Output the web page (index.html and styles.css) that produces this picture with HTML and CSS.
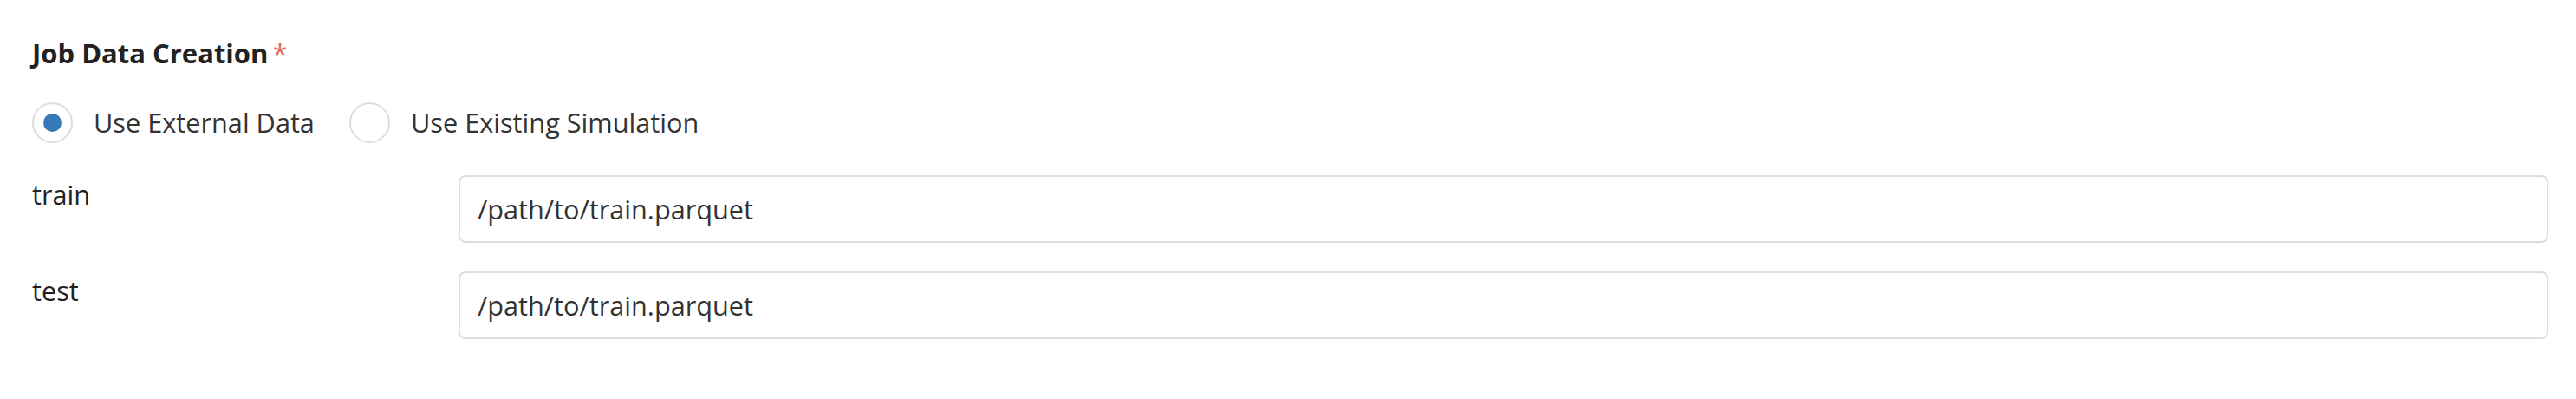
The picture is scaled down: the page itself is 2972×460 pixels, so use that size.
FILE: index.html
```html
<!DOCTYPE html>
<html lang="en">
<head>
<meta charset="utf-8">
<title>Job Data Creation</title>
<link rel="stylesheet" href="styles.css">
</head>
<body>
<form class="form">
  <div class="title">Job Data Creation<span class="req">*</span></div>
  <div class="radios">
    <label class="radio">
      <span class="dot checked"></span>
      <span class="radio-label">Use External Data</span>
    </label>
    <label class="radio">
      <span class="dot"></span>
      <span class="radio-label">Use Existing Simulation</span>
    </label>
  </div>
  <div class="fields">
    <div class="row">
      <label class="field-label">train</label>
      <input class="field-input" type="text" value="/path/to/train.parquet">
    </div>
    <div class="row">
      <label class="field-label">test</label>
      <input class="field-input" type="text" value="/path/to/train.parquet">
    </div>
  </div>
</form>
</body>
</html>
```

FILE: styles.css
```css
html, body {
  margin: 0;
  padding: 0;
  background: #ffffff;
}

body {
  font-family: "Open Sans", "Liberation Sans", sans-serif;
  font-size: 30.7px;
  line-height: 45px;
  color: #333333;
}

.form {
  padding: 39px 32px 0 37px;
  display: flex;
  flex-direction: column;
}

.title {
  font-weight: 700;
  font-size: 31px;
  color: #222222;
  height: 45px;
}

.req {
  color: #e0685a;
  font-weight: 400;
  margin-left: 5px;
}

.radios {
  display: flex;
  align-items: center;
  gap: 40px;
  margin-top: 34px;
  height: 47px;
}

.radio {
  display: flex;
  align-items: center;
  gap: 24px;
}

.dot {
  width: 47px;
  height: 47px;
  box-sizing: border-box;
  border: 2px solid #dddddd;
  border-radius: 50%;
  display: flex;
  align-items: center;
  justify-content: center;
  background: #ffffff;
}

.dot.checked::after {
  content: "";
  width: 21px;
  height: 21px;
  border-radius: 50%;
  background: #337ab7;
}

.radio-label {
  color: #333333;
}

.fields {
  display: flex;
  flex-direction: column;
  gap: 33px;
  margin-top: 37px;
}

.row {
  display: flex;
  align-items: flex-start;
}

.field-label {
  width: 492px;
  flex: none;
  color: #222222;
}

.field-input {
  flex: 1;
  height: 78px;
  box-sizing: border-box;
  border: 2px solid #dddddd;
  border-radius: 8px;
  padding: 0 20px;
  font-family: "Open Sans", "Liberation Sans", sans-serif;
  font-size: 30.7px;
  color: #333333;
  background: #ffffff;
  outline: none;
}
```
